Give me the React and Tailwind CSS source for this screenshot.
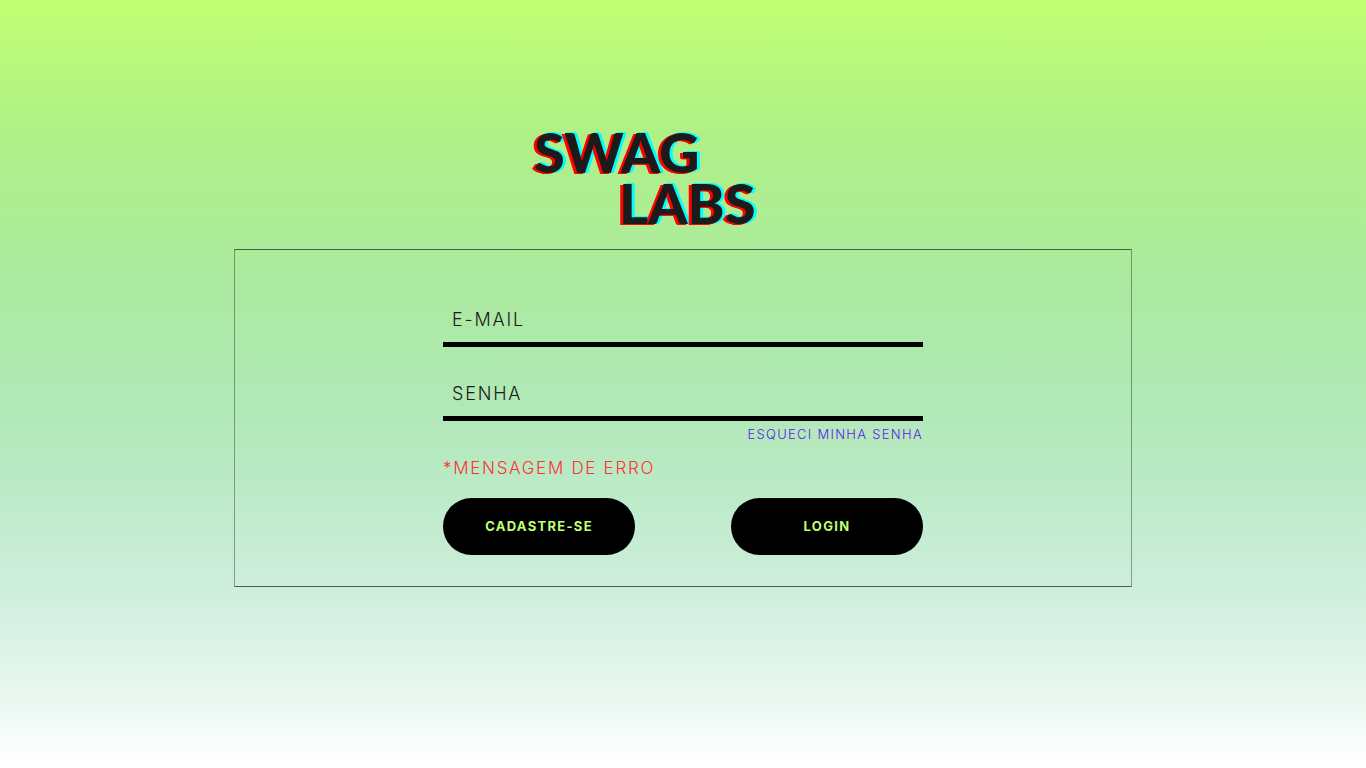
function Logo() {
  return (
    <h1 className="flex w-[298px] flex-col gap-px font-['Lato',sans-serif] text-[56px] leading-[50px] font-black text-[#1b1b1b] [text-shadow:-2px_1px_0_#ff0000,-3px_1px_0_#ff0000,2px_-1px_0_#00ffff,3px_0_0_#00ffff]">
      <span className="w-fit">SWAG</span>
      <span className="ml-[85px] w-fit">LABS</span>
    </h1>
  );
}

function Field({ id, label, type }) {
  return (
    <div className="grid">
      <label
        htmlFor={id}
        className="z-10 col-start-1 row-start-1 cursor-text self-center justify-self-start px-[9px] pb-1 text-lg tracking-widest text-[#1b1b1b]"
      >
        {label}
      </label>
      <input
        id={id}
        type={type}
        className="col-start-1 row-start-1 h-[51px] w-full border-b-5 border-black bg-transparent px-2 text-lg text-black outline-none"
      />
    </div>
  );
}

const buttonClass =
  "h-[57px] w-2/5 cursor-pointer rounded-full bg-black text-[13px] font-bold tracking-widest text-[#c1ff72]";

export default function App() {
  return (
    <main className="flex min-h-screen flex-col items-center bg-[linear-gradient(to_bottom,#c1ff72_0%,#aff087_18%,#abeaa0_37%,#b0e9b5_52%,#bceac8_64%,#cdeedc_76%,#e5f6ed_89%,#ffffff_99%)] px-4 pt-[127px] pb-12 font-['Inter','Open_Sans',sans-serif] font-light">
      <Logo />
      <section className="mt-[21px] flex w-full max-w-[898px] justify-center border border-x-black/35 border-y-black/60 px-6 pt-[46px] pb-[31px]">
        <form className="w-full max-w-[480px]" onSubmit={(e) => e.preventDefault()}>
          <div className="flex flex-col gap-[23px]">
            <Field id="email" label="E-MAIL" type="email" />
            <Field id="senha" label="SENHA" type="password" />
          </div>
          <div className="mt-[3px] text-right">
            <a href="#senha" className="block text-[13px] leading-5 tracking-widest text-[#5e17eb]">
              ESQUECI MINHA SENHA
            </a>
          </div>
          <p role="alert" className="mt-3 text-[17px] leading-6 tracking-widest text-[#ff3131]">
            *MENSAGEM DE ERRO
          </p>
          <div className="mt-[18px] flex justify-between">
            <button type="button" className={buttonClass}>
              CADASTRE-SE
            </button>
            <button type="submit" className={buttonClass}>
              LOGIN
            </button>
          </div>
        </form>
      </section>
    </main>
  );
}
